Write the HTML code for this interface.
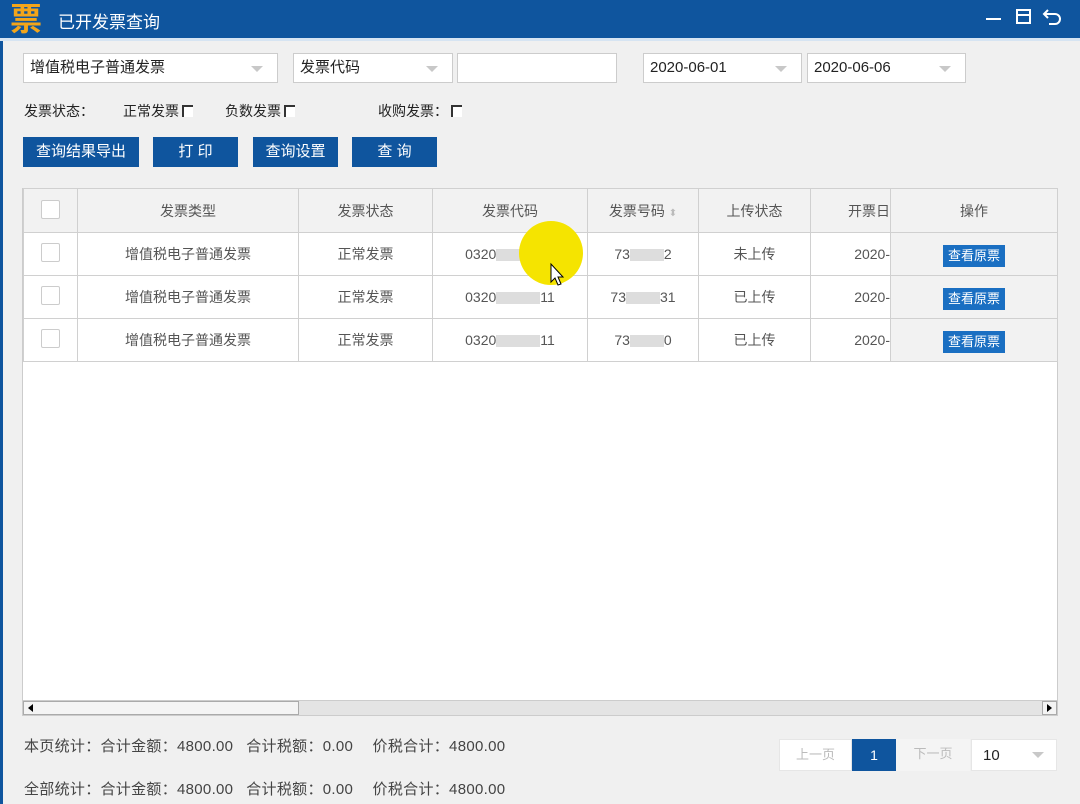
<!DOCTYPE html>
<html><head><meta charset="utf-8"><style>
*{box-sizing:border-box;margin:0;padding:0}
body{width:1080px;height:804px;background:#f0f0f0;font-family:"Liberation Sans","Noto Sans CJK SC",sans-serif;font-size:14px;color:#333;position:relative;overflow:hidden}
.a{position:absolute}
.title{left:0;top:0;width:1080px;height:38px;background:#0f559e}
.inp{background:#fff;border:1px solid #ccc;height:30px;line-height:28px;padding-left:6px;font-size:15px;color:#222}
.arr{position:absolute;right:14px;top:12px;border-left:6px solid transparent;border-right:6px solid transparent;border-top:6px solid #c8c8c8}
.btn{background:#0f559e;color:#fff;height:30px;line-height:30px;text-align:center;font-size:15px}
.cb{display:inline-block;width:11px;height:12px;border-left:2px solid #333;border-top:2px solid #333;background:#fff;vertical-align:-1px;margin-left:3px}
table{border-collapse:collapse;table-layout:fixed}
td{border:1px solid #d0d0d0;height:43px;text-align:center;color:#555;font-size:14px;background:#fff;white-space:nowrap;overflow:hidden}
tr.h td{background:#f2f2f2;height:44px}
td.op{background:#f2f2f2}
.ck{display:inline-block;width:19px;height:19px;border:1px solid #ccc;background:#fff;border-radius:2px}
.vb{display:inline-block;background:#1a6fc2;color:#fff;font-size:13px;padding:0 5px;height:22px;line-height:22px;margin-top:4px}
.blur{display:inline-block;width:44px;height:12px;background:#ddd;vertical-align:middle}
.ft{font-size:15px;color:#444;letter-spacing:0.3px;word-spacing:2px}
</style></head><body>
<div class="a" style="left:0;top:0;width:3px;height:804px;background:#0f559e"></div>
<div class="a title"></div>
<div class="a" style="left:10px;top:1px;font-size:32px;font-weight:bold;color:#f3a51a;line-height:36px">票</div>
<div class="a" style="left:58px;top:8px;font-size:17px;color:#fff">已开发票查询</div>
<div class="a" style="left:986px;top:18px;width:15px;height:2px;background:#fff"></div>
<div class="a" style="left:1016px;top:9px;width:15px;height:15px;border:2px solid #fff"><div style="height:2px;background:#fff;margin-top:3px"></div></div>
<svg class="a" style="left:1042px;top:7px" width="22" height="20"><path d="M6 3 L2 7 L6 11 M2 7 H13 A5 5 0 0 1 13 17 H7" fill="none" stroke="#fff" stroke-width="2"/></svg>

<div class="a" style="left:0;top:38px;width:1080px;height:3px;background:#d6e4f2"></div>

<div class="a inp" style="left:23px;top:53px;width:255px">增值税电子普通发票<i class="arr"></i></div>
<div class="a inp" style="left:293px;top:53px;width:160px">发票代码<i class="arr"></i></div>
<div class="a inp" style="left:457px;top:53px;width:160px"></div>
<div class="a inp" style="left:643px;top:53px;width:159px">2020-06-01<i class="arr"></i></div>
<div class="a inp" style="left:807px;top:53px;width:159px">2020-06-06<i class="arr"></i></div>

<div class="a" style="left:24px;top:101px;font-size:14px;color:#222">发票状态：</div>
<div class="a" style="left:123px;top:101px;font-size:14px;color:#222">正常发票<i class="cb"></i></div>
<div class="a" style="left:225px;top:101px;font-size:14px;color:#222">负数发票<i class="cb"></i></div>
<div class="a" style="left:378px;top:101px;font-size:14px;color:#222">收购发票：<i class="cb"></i></div>

<div class="a btn" style="left:23px;top:137px;width:116px">查询结果导出</div>
<div class="a btn" style="left:153px;top:137px;width:85px">打 印</div>
<div class="a btn" style="left:253px;top:137px;width:85px">查询设置</div>
<div class="a btn" style="left:352px;top:137px;width:85px">查 询</div>

<div class="a" style="left:22px;top:188px;width:1036px;height:528px;background:#fff;border:1px solid #ccc"></div>
<table class="a" style="left:23px;top:188px;width:1034px">
<colgroup><col style="width:54px"><col style="width:221px"><col style="width:134px"><col style="width:155px"><col style="width:111px"><col style="width:112px"><col style="width:80px"><col style="width:167px"></colgroup>
<tr class="h"><td><span class="ck"></span></td><td>发票类型</td><td>发票状态</td><td>发票代码</td><td>发票号码 <span style="color:#bbb;font-size:10px">⬍</span></td><td>上传状态</td><td style="text-align:right;padding-right:0">开票日</td><td class="op">操作</td></tr>
<tr><td><span class="ck"></span></td><td>增值税电子普通发票</td><td>正常发票</td><td>0320<span class="blur"></span>11</td><td>73<span class="blur" style="width:34px"></span>2</td><td>未上传</td><td style="text-align:right;padding-right:0">2020-</td><td class="op"><span class="vb">查看原票</span></td></tr>
<tr><td><span class="ck"></span></td><td>增值税电子普通发票</td><td>正常发票</td><td>0320<span class="blur"></span>11</td><td>73<span class="blur" style="width:34px"></span>31</td><td>已上传</td><td style="text-align:right;padding-right:0">2020-</td><td class="op"><span class="vb">查看原票</span></td></tr>
<tr><td><span class="ck"></span></td><td>增值税电子普通发票</td><td>正常发票</td><td>0320<span class="blur"></span>11</td><td>73<span class="blur" style="width:34px"></span>0</td><td>已上传</td><td style="text-align:right;padding-right:0">2020-</td><td class="op"><span class="vb">查看原票</span></td></tr>
</table>
<div class="a" style="left:519px;top:221px;width:64px;height:64px;border-radius:50%;background:#f5e400"></div>
<svg class="a" style="left:549px;top:262px" width="16" height="24"><path d="M2 2 V20 L6 16 L9 23 L12 22 L9 15 L14 15 Z" fill="#fff" stroke="#000" stroke-width="1"/></svg>

<div class="a" style="left:23px;top:700px;width:1034px;height:15px;background:#e4e4e4;border-top:1px solid #ccc"></div>
<div class="a" style="left:23px;top:701px;width:276px;height:14px;background:#f4f4f4;border:1px solid #aaa"></div>
<div class="a" style="left:28px;top:704px;border-top:4px solid transparent;border-bottom:4px solid transparent;border-right:5px solid #000"></div>
<div class="a" style="left:1042px;top:701px;width:15px;height:14px;background:#f4f4f4;border:1px solid #aaa"></div>
<div class="a" style="left:1047px;top:704px;border-top:4px solid transparent;border-bottom:4px solid transparent;border-left:5px solid #000"></div>

<div class="a ft" style="left:24px;top:735px">本页统计：合计金额：4800.00&nbsp;&nbsp;合计税额：0.00&nbsp;&nbsp;&nbsp;价税合计：4800.00</div>
<div class="a ft" style="left:24px;top:778px">全部统计：合计金额：4800.00&nbsp;&nbsp;合计税额：0.00&nbsp;&nbsp;&nbsp;价税合计：4800.00</div>

<div class="a" style="left:779px;top:739px;width:73px;height:32px;background:#fff;border:1px solid #e6e6e6;text-align:center;line-height:30px;color:#bbb;font-size:13px">上一页</div>
<div class="a" style="left:852px;top:739px;width:44px;height:32px;background:#0f559e;text-align:center;line-height:32px;color:#fff;font-size:14px">1</div>
<div class="a" style="left:896px;top:739px;width:74px;height:32px;background:#f4f4f4;text-align:center;line-height:30px;color:#bbb;font-size:13px">下一页</div>
<div class="a" style="left:971px;top:739px;width:86px;height:32px;background:#fff;border:1px solid #e6e6e6;line-height:32px;padding-left:11px;font-size:15px;color:#222">10<i class="arr" style="top:12px;right:12px"></i></div>
</body></html>
